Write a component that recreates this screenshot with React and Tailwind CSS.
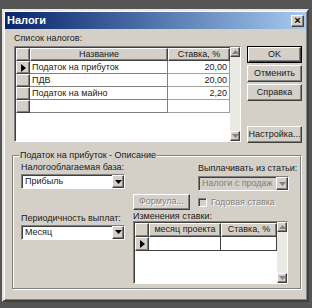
import React from "react";

const raised = "border border-t-white border-l-white border-r-[#404040] border-b-[#404040] shadow-[inset_-1px_-1px_0_#808080]";
const sunken = "border border-t-[#808080] border-l-[#808080] border-r-white border-b-white shadow-[inset_1px_1px_0_#404040]";

function Arrow({ up, gray }) {
  return (
    <svg width="7" height="4" viewBox="0 0 7 4">
      <path d={up ? "M0 4 L3.5 0 L7 4 Z" : "M0 0 L7 0 L3.5 4 Z"} fill={gray ? "#808080" : "#000"} />
    </svg>
  );
}

function Pointer() {
  return (
    <svg width="5" height="8" viewBox="0 0 5 8">
      <path d="M0 0 L5 4 L0 8 Z" fill="#000" />
    </svg>
  );
}

function ScrollCol() {
  return (
    <div className="flex w-[10px] flex-col justify-between bg-[#ebe9e4]">
      <div className={`flex h-[10px] items-center justify-center bg-[#d4d0c8] ${raised}`}><Arrow up gray /></div>
      <div className={`flex h-[10px] items-center justify-center bg-[#d4d0c8] ${raised}`}><Arrow gray /></div>
    </div>
  );
}

function Btn({ children, main, disabled, className = "" }) {
  return (
    <div className={`flex items-center justify-center bg-[#d4d0c8] ${main ? "border border-black" : ""} ${className}`}>
      <div className={`flex h-full w-full items-center justify-center ${raised}`}>
        <span className={disabled ? "text-[#808080] [text-shadow:1px_1px_0_#fff]" : ""}>{children}</span>
      </div>
    </div>
  );
}

function Combo({ value, disabled, className = "" }) {
  return (
    <div className={`flex h-[15px] items-stretch ${disabled ? "bg-[#d4d0c8]" : "bg-white"} ${sunken} ${className}`}>
      <div className={`flex-1 overflow-hidden pl-[3px] leading-[13px] ${disabled ? "text-[#808080]" : ""}`}>{value}</div>
      <div className={`flex w-[12px] items-center justify-center bg-[#d4d0c8] ${raised}`}>
        <Arrow gray={disabled} />
      </div>
    </div>
  );
}

function TaxGrid() {
  const rows = [
    ["Податок на прибуток", "20,00"],
    ["ПДВ", "20,00"],
    ["Податок на майно", "2,20"],
    ["", ""],
  ];
  return (
    <div className={`flex h-[96px] w-[227px] bg-white ${sunken}`}>
      <div className="flex flex-1 flex-col pl-[1px] pt-[1px]">
        <div className="flex h-[13px]">
          <div className={`w-[14px] bg-[#d4d0c8] ${raised}`} />
          <div className={`flex w-[138px] items-center justify-center bg-[#d4d0c8] ${raised}`}>Название</div>
          <div className={`flex flex-1 items-center justify-center bg-[#d4d0c8] ${raised}`}>Ставка, %</div>
        </div>
        {rows.map((r, i) => (
          <div key={i} className="flex h-[13px]">
            <div className={`flex w-[14px] items-center justify-center bg-[#d4d0c8] ${raised}`}>
              {i === 0 && <Pointer />}
            </div>
            <div className="w-[138px] border-b border-r border-[#808080] pl-[2px] leading-[12px]">{r[0]}</div>
            <div className="flex-1 border-b border-r border-[#a0a0a0] pr-[2px] text-right leading-[12px]">{r[1]}</div>
          </div>
        ))}
      </div>
      <ScrollCol />
    </div>
  );
}

function RateGrid() {
  return (
    <div className={`flex h-[63px] w-[155px] bg-white ${sunken}`}>
      <div className="flex flex-1 flex-col pl-[1px] pt-[1px]">
        <div className="flex h-[14px]">
          <div className={`w-[14px] bg-[#d4d0c8] ${raised}`} />
          <div className={`flex w-[72px] items-center justify-center bg-[#d4d0c8] ${raised}`}>месяц проекта</div>
          <div className={`flex flex-1 items-center justify-center bg-[#d4d0c8] ${raised}`}>Ставка, %</div>
        </div>
        <div className="flex h-[14px]">
          <div className={`flex w-[14px] items-center justify-center bg-[#d4d0c8] ${raised}`}><Pointer /></div>
          <div className="w-[72px] border-b border-r border-[#404040]" />
          <div className="flex-1 border-b border-r border-[#404040]" />
        </div>
      </div>
      <ScrollCol />
    </div>
  );
}

export default function App() {
  return (
    <div className="h-[308px] w-[312px] whitespace-nowrap bg-[#555555] pb-[6px] pl-[2px] pr-[3px] pt-[9px] font-['Liberation_Sans',sans-serif] text-[9px] text-[#1a1a1a]">
      <div className="flex h-[293px] w-[307px] flex-col border-2 border-t-[#e8e6e0] border-l-[#e8e6e0] border-r-[#404040] border-b-[#404040] bg-[#d4d0c8] shadow-[inset_1px_1px_0_#fff,inset_-1px_-1px_0_#808080]">
        {/* title bar */}
        <div className="mx-[1px] mt-[1px] flex h-[17px] items-center justify-between bg-gradient-to-r from-[#0a246a] to-[#a6caf0] pl-[2px] pr-[2px]">
          <span className="text-[11px] font-bold text-white">Налоги</span>
          <div className={`flex h-[12px] w-[13px] items-center justify-center bg-[#d4d0c8] text-[11px] font-bold leading-none text-black ${raised}`}>×</div>
        </div>

        {/* top section */}
        <div className="flex pl-[10px] pt-[2px]">
          <div className="flex flex-col">
            <div className="h-[15px] leading-[14px]">Список налогов:</div>
            <TaxGrid />
          </div>
          <div className="ml-[6px] flex w-[55px] flex-col pt-[15px]">
            <Btn main className="h-[17px]">OK</Btn>
            <Btn className="mt-[2px] h-[17px]">Отменить</Btn>
            <Btn className="mt-[2px] h-[17px]">Справка</Btn>
            <Btn className="mt-[25px] h-[17px]">Настройка...</Btn>
          </div>
        </div>

        {/* group box */}
        <div className="relative ml-[8px] mt-[12px] h-[134px] w-[289px] border border-[#808080] shadow-[1px_1px_0_#fff,inset_1px_1px_0_#fff]">
          <span className="absolute -top-[7px] left-[6px] bg-[#d4d0c8] px-[1px] leading-[12px]">Податок на прибуток - Описание</span>
          <div className="flex pl-[8px] pt-[5px]">
            <div className="flex w-[104px] flex-col">
              <div className="h-[13px] leading-[12px]">Налогооблагаемая база:</div>
              <Combo value="Прибыль" />
            </div>
            <div className="ml-[8px] flex w-[57px] flex-col justify-end">
              <Btn disabled className="h-[16px]">Формула...</Btn>
            </div>
            <div className="ml-[8px] flex w-[91px] flex-col">
              <div className="h-[15px] leading-[14px]">Выплачивать из статьи:</div>
              <Combo value="Налоги с продаж" disabled />
              <div className="mt-[5px] flex items-center">
                <div className={`h-[9px] w-[9px] bg-[#d4d0c8] ${sunken}`} />
                <span className="ml-[4px] text-[#808080] [text-shadow:1px_1px_0_#fff]">Годовая ставка</span>
              </div>
            </div>
          </div>
          <div className="flex pl-[8px] pt-[2px]">
            <div className="flex w-[104px] flex-col">
              <div className="h-[13px] leading-[12px]">Периодичность выплат:</div>
              <Combo value="Месяц" />
            </div>
            <div className="ml-[8px] flex flex-col">
              <div className="h-[9px] leading-[8px]">Изменения ставки:</div>
              <RateGrid />
            </div>
          </div>
        </div>
      </div>
    </div>
  );
}
